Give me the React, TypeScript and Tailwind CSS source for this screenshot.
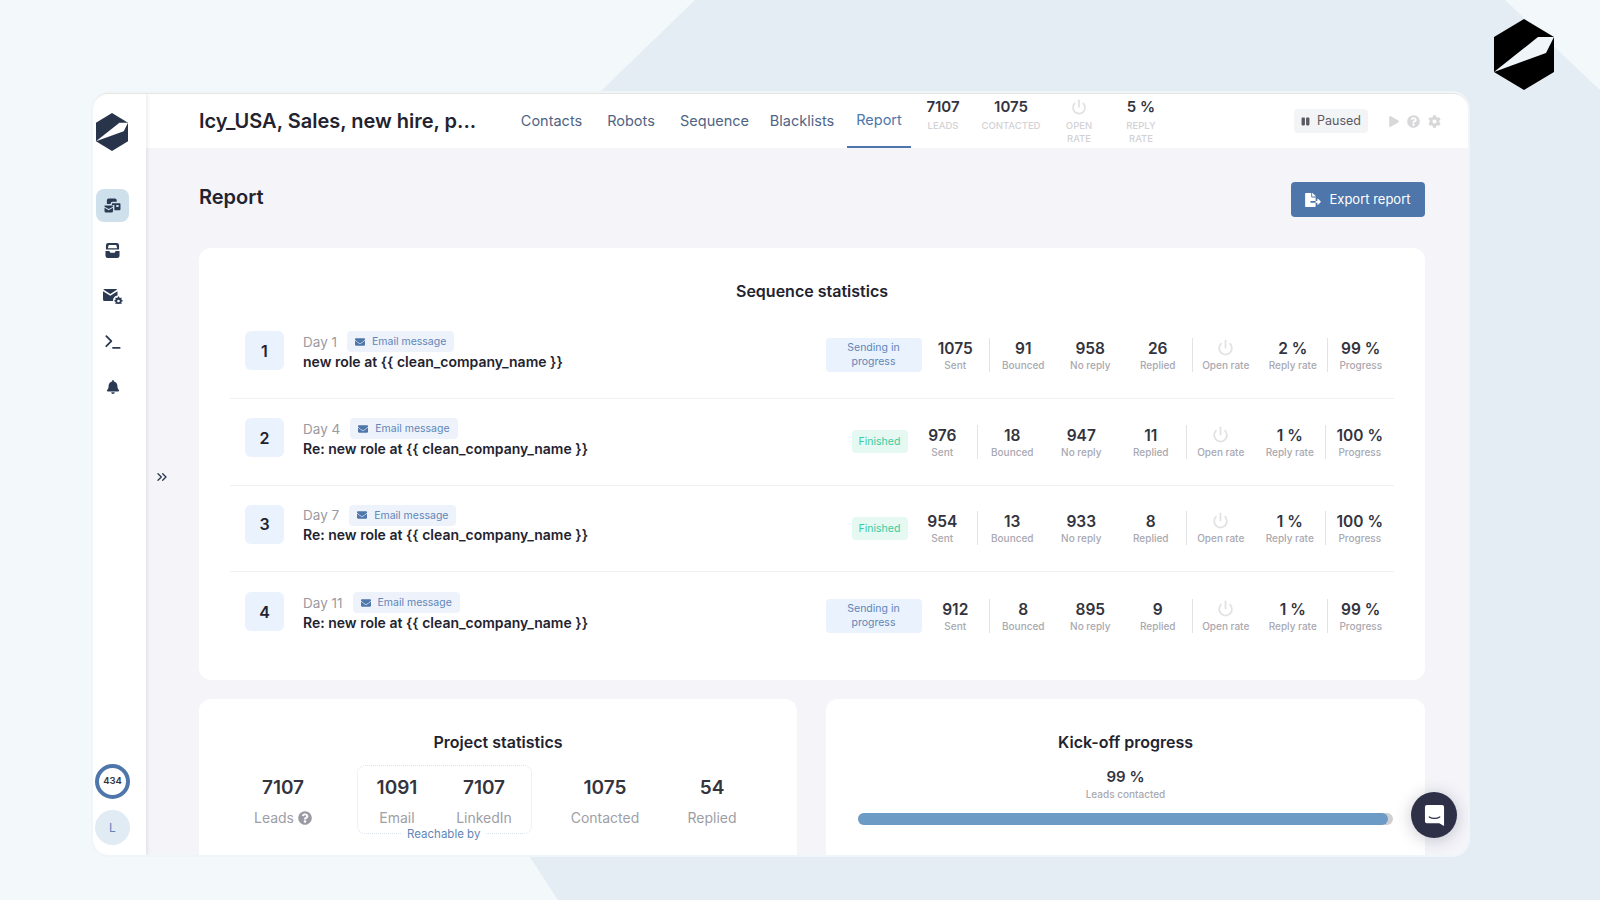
import { ChevronsRight, Power, Terminal } from 'lucide-react'
import { FaBell, FaCog, FaEnvelope, FaFileExport, FaPause, FaPlay, FaQuestionCircle } from 'react-icons/fa'

const font = { fontFamily: 'Inter, "Liberation Sans", sans-serif' }

interface Step {
  n: number
  day: string
  subject: string
  status: 'sending' | 'finished'
  sent: number
  bounced: number
  noReply: number
  replied: number
  replyRate: string
  progress: string
}

const steps: Step[] = [
  { n: 1, day: 'Day 1', subject: 'new role at {{ clean_company_name }}', status: 'sending', sent: 1075, bounced: 91, noReply: 958, replied: 26, replyRate: '2 %', progress: '99 %' },
  { n: 2, day: 'Day 4', subject: 'Re: new role at {{ clean_company_name }}', status: 'finished', sent: 976, bounced: 18, noReply: 947, replied: 11, replyRate: '1 %', progress: '100 %' },
  { n: 3, day: 'Day 7', subject: 'Re: new role at {{ clean_company_name }}', status: 'finished', sent: 954, bounced: 13, noReply: 933, replied: 8, replyRate: '1 %', progress: '100 %' },
  { n: 4, day: 'Day 11', subject: 'Re: new role at {{ clean_company_name }}', status: 'sending', sent: 912, bounced: 8, noReply: 895, replied: 9, replyRate: '1 %', progress: '99 %' }
]

function Logo({ className, fill, cut }: { className: string; fill: string; cut: string }) {
  return (
    <svg viewBox="0 0 60 71" className={className}>
      <polygon points="30,0 60,18 60,53 30,71 0,53 0,18" fill={fill} />
      <polygon points="0,53 44,18 60,18 52,34" fill={cut} />
    </svg>
  )
}

function CampaignIcon() {
  return (
    <svg viewBox="0 0 18 16" className="w-[17px] h-[15px]" fill="#2b3a52">
      <path d="M3 2.5a2 2 0 0 1 2-2h6.5a2 2 0 0 1 2 2V4H9a2 2 0 0 0-2 2v.5H3z" />
      <path d="M0.5 8h9v1.2L5 11.7.5 9.2z" />
      <path d="M.5 10.5 5 13l4.500-2.500V14a1.500 1.500 0 0 1-1.500 1.500H2A1.500 1.500 0 0 1 .5 14z" />
      <path d="M8.500 5.500h8a1 1 0 0 1 1 1V12a1 1 0 0 1-1 1h-5.500V7.500h-2.500zM13 7.500v2h2.500v-2z" />
    </svg>
  )
}

function InboxIcon() {
  return (
    <svg viewBox="0 0 16 16" className="w-[15px] h-[15px]" fill="#2b3a52">
      <path d="M3.500 0h9A2.500 2.500 0 0 1 15 2.500V7H1V2.500A2.500 2.500 0 0 1 3.500 0zM3 5.500h10L12 2.200H4z" fillRule="evenodd" />
      <path d="M0.500 8.500h4.200l1 2h4.600l1-2h4.200v5A2.500 2.500 0 0 1 13 16H3a2.500 2.500 0 0 1-2.500-2.500z" />
    </svg>
  )
}

function MailGearIcon() {
  return (
    <svg viewBox="0 0 20 15" className="w-[20px] h-[15px]" fill="#2b3a52">
      <path d="M1.500 0h11.500a1.500 1.500 0 0 1 1.200.6L7.300 5 .3.600A1.500 1.500 0 0 1 1.500 0z" />
      <path d="M0 2.200l7.300 4.600 7.200-4.600V6.500a5 5 0 0 0-4.500 5.500H1.500A1.500 1.500 0 0 1 0 10.500z" />
      <path d="M15 7.500l1 .1.300 1 .9.400.900-.5.700.7-.5.900.4.900 1 .3v1l-1 .3-.4.900.5.900-.7.700-.9-.5-.9.400-.3 1h-1l-.3-1-.9-.4-.9.500-.7-.7.500-.9-.4-.9-1-.3v-1l1-.3.400-.9-.5-.9.700-.7.900.5.900-.4zM15.500 10.700a1.300 1.300 0 1 0 .01 0z" fillRule="evenodd" />
    </svg>
  )
}

function Stat({ value, label, width, divider }: { value?: string | number; label: string; width: string; divider?: boolean }) {
  return (
    <div className={`${width} h-[34px] pt-[1px] flex flex-col items-center justify-between shrink-0 ${divider ? 'border-l border-[#e3e3e6]' : ''}`}>
      {value === undefined ? (
        <Power className="w-[17px] h-[17px] text-[#e2e2e4]" strokeWidth={2.5} />
      ) : (
        <span className="text-[15.5px] leading-[19px] font-semibold text-[#33343e]">{value}</span>
      )}
      <span className="text-[10px] leading-[13px] font-medium text-[#a9a9b1] whitespace-nowrap">{label}</span>
    </div>
  )
}

function StepRow({ step, last }: { step: Step; last: boolean }) {
  const cell = step.status === 'finished' ? 'w-[69.5px]' : 'w-[67.5px]'
  return (
    <div className={`h-[86.75px] flex items-center ${last ? '' : 'border-b border-[#f0f0f3]'}`}>
      <div className="ml-[15px] mb-[8px] w-[39px] h-[39px] rounded-md bg-[#eaf2fd] flex items-center justify-center text-[16px] font-semibold text-[#23232f]">
        {step.n}
      </div>
      <div className="ml-[19px] mb-[6px]">
        <div className="flex items-center h-[20px]">
          <span className="text-[13.5px] text-[#9a9aa2]">{step.day}</span>
          <span className="ml-[10px] h-[21px] px-2 rounded bg-[#eef3fb] flex items-center gap-[7px] text-[10.5px] text-[#5f86b8]">
            <FaEnvelope className="w-[10px] h-[10px] text-[#4e76aa]" />
            Email message
          </span>
        </div>
        <div className="text-[14px] leading-[20px] font-semibold text-[#23232f]">{step.subject}</div>
      </div>
      <div className="ml-auto flex items-center">
        {step.status === 'sending' ? (
          <div className="w-[96px] h-[34px] rounded bg-[#eaf2fd] flex items-center justify-center text-center text-[10.5px] leading-[13.500px] text-[#5f86b8]">
            Sending in<br />progress
          </div>
        ) : (
          <div className="w-[56px] h-[23px] rounded bg-[#e6f8f2] flex items-center justify-center text-[10.5px] text-[#3bcb9e]">
            Finished
          </div>
        )}
        <Stat value={step.sent} label="Sent" width={cell} />
        <Stat value={step.bounced} label="Bounced" width={cell} divider />
        <Stat value={step.noReply} label="No reply" width={cell} />
        <Stat value={step.replied} label="Replied" width={cell} />
        <Stat label="Open rate" width={cell} divider />
        <Stat value={step.replyRate} label="Reply rate" width={cell} />
        <Stat value={step.progress} label="Progress" width={cell} divider />
      </div>
    </div>
  )
}

function HeaderStat({ value, label, width }: { value?: string; label: string; width: string }) {
  return (
    <div className={`${width} flex flex-col items-center text-center`}>
      {value ? (
        <span className="h-[20px] text-[15px] leading-[20px] font-semibold text-[#33343e]">{value}</span>
      ) : (
        <span className="h-[20px] flex items-center"><Power className="w-[16px] h-[16px] text-[#e0e0e2]" strokeWidth={2.5} /></span>
      )}
      <span className="mt-[2px] max-w-[60px] text-[9.5px] leading-[13px] font-medium text-[#d2d2d6] uppercase">{label}</span>
    </div>
  )
}

function BigStat({ value, label, width, icon }: { value: string; label: string; width: string; icon?: boolean }) {
  return (
    <div className={`${width} flex flex-col items-center shrink-0`}>
      <span className="text-[19px] leading-[26px] font-semibold text-[#33343e]">{value}</span>
      <span className="mt-[6px] flex items-center gap-1 text-[14px] leading-[22px] text-[#9e9ea6]">
        {label}
        {icon && <FaQuestionCircle className="w-[14px] h-[14px] text-[#9a9aa2]" />}
      </span>
    </div>
  )
}

export default function App() {
  return (
    <div className="relative w-[1600px] h-[900px] overflow-hidden bg-[#f3f8fb]" style={font}>
      {/* background shapes */}
      <svg viewBox="0 0 1600 900" className="absolute inset-0 w-full h-full">
        <polygon points="695,0 1505,0 1600,90 1600,900 558,900 250,430" fill="#e5edf4" />
      </svg>
      <Logo className="absolute left-[1494px] top-[19px] w-[60px] h-[71px]" fill="#000000" cut="#f0f5fa" />

      <div className="relative ml-[93px] pt-[93px] w-[1375px]">
        <div className="relative h-[762px] rounded-2xl overflow-hidden flex bg-[#f4f4f9] border-t border-[#e6e6e0] ring-[2px] ring-[#f0f5fa]">
          {/* sidebar */}
          <aside className="w-[53px] shrink-0 pr-[14px] bg-white shadow-[2px_0_3px_rgba(40,40,70,0.08)] z-10 flex flex-col items-center">
            <Logo className="mt-[19px] -ml-[2px] w-[32px] h-[38px]" fill="#27344a" cut="#ffffff" />
            <div className="mt-[38px] w-[33px] h-[33px] rounded-lg bg-[#cfe0ed] flex items-center justify-center">
              <CampaignIcon />
            </div>
            <div className="mt-[21px] h-[15px] flex items-center"><InboxIcon /></div>
            <div className="mt-[31px] h-[15px] flex items-center"><MailGearIcon /></div>
            <div className="mt-[30px] h-[15px] flex items-center">
              <Terminal className="w-[20px] h-[20px] text-[#2b3a52]" strokeWidth={2.2} />
            </div>
            <div className="mt-[30px] h-[15px] flex items-center"><FaBell className="w-[14px] h-[14px] text-[#2b3a52]" /></div>
            <div className="mt-auto w-[35px] h-[35px] rounded-full border-[4px] border-[#4e76aa] flex items-center justify-center text-[9.5px] font-semibold text-[#33343e]">
              434
            </div>
            <div className="mt-[11px] mb-[10px] w-[35px] h-[35px] rounded-full bg-[#e1ebf4] flex items-center justify-center text-[12px] text-[#5f86b8]">
              L
            </div>
          </aside>

          <div className="flex-1 min-w-0 flex flex-col">
            {/* header */}
            <header className="h-[54px] shrink-0 bg-white flex items-center pl-[53px] pr-[27px]">
              <h1 className="w-[321px] shrink-0 text-[20px] font-semibold text-[#23232f] whitespace-nowrap">Icy_USA, Sales, new hire, p...</h1>
              <nav className="flex h-full -ml-[7px] text-[14.5px] text-[#4f6484]">
                <a className="w-[77px] pb-[1px] flex items-center justify-center">Contacts</a>
                <a className="w-[82px] pb-[1px] flex items-center justify-center">Robots</a>
                <a className="w-[85px] pb-[1px] flex items-center justify-center">Sequence</a>
                <a className="w-[90px] pb-[1px] flex items-center justify-center">Blacklists</a>
                <a className="w-[64px] flex items-center justify-center text-[#4e76aa] border-b-2 border-[#4e76aa]">Report</a>
              </nav>
              <div className="flex items-start self-start pt-[3px]">
                <HeaderStat value="7107" label="Leads" width="w-[64px]" />
                <HeaderStat value="1075" label="Contacted" width="w-[72px]" />
                <HeaderStat label="Open rate" width="w-[64px] px-[16px]" />
                <HeaderStat value="5 %" label="Reply rate" width="w-[60px] px-[14px]" />
              </div>
              <div className="ml-auto w-[74px] h-[24px] rounded bg-[#f3f4f6] flex items-center justify-center gap-[7px] text-[12.5px] text-[#5a5a64]">
                <FaPause className="w-[9px] h-[9px] text-[#5a5a64]" />
                Paused
              </div>
              <div className="ml-[21px] flex items-center gap-[8px] text-[#d8d8da]">
                <FaPlay className="w-[10px] h-[11px]" />
                <FaQuestionCircle className="w-[13px] h-[13px]" />
                <FaCog className="w-[13px] h-[13px]" />
              </div>
            </header>

            {/* content */}
            <main className="flex-1 min-h-0 overflow-hidden pl-[53px] pr-[43px] pt-[34px]">
              <div className="flex items-start justify-between h-[35px]">
                <h2 className="-mt-[1px] text-[20px] leading-[32px] font-semibold text-[#23232f]">Report</h2>
                <button className="w-[134px] h-[35px] rounded bg-[#4e76aa] text-white text-[13px] flex items-center justify-center gap-[8px]">
                  <FaFileExport className="w-[16px] h-[14px]" />
                  Export report
                </button>
              </div>

              <section className="mt-[31px] h-[432px] rounded-xl bg-white px-[31px] pt-[32px]">
                <h3 className="text-center text-[16px] leading-[22px] font-semibold text-[#23232f]">Sequence statistics</h3>
                <div className="mt-[10px]">
                  {steps.map((s, i) => (
                    <StepRow key={s.n} step={s} last={i === steps.length - 1} />
                  ))}
                </div>
              </section>

              <div className="mt-[19px] grid grid-cols-[598px_599px] gap-[29px]">
                <section className="h-[200px] rounded-xl bg-white pt-[32px]">
                  <h3 className="text-center text-[16px] leading-[22px] font-semibold text-[#23232f]">Project statistics</h3>
                  <div className="mt-[12px] ml-[26px] flex items-start">
                    <div className="pt-[10px]"><BigStat value="7107" label="Leads" width="w-[116px]" icon /></div>
                    <div className="relative ml-[16px] w-[175px] h-[69px] rounded-lg border border-dotted border-[#d9e3ee] pt-[9px] flex justify-center pr-[8px]">
                      <BigStat value="1091" label="Email" width="w-[87px]" />
                      <BigStat value="7107" label="LinkedIn" width="w-[87px]" />
                      <span className="absolute left-[43px] top-[60px] bg-white px-[6px] text-[11.500px] leading-[16px] text-[#5f86b8] whitespace-nowrap">Reachable by</span>
                    </div>
                    <div className="pt-[10px] flex">
                      <BigStat value="1075" label="Contacted" width="w-[146px]" />
                      <BigStat value="54" label="Replied" width="w-[68px]" />
                    </div>
                  </div>
                </section>

                <section className="h-[200px] rounded-xl bg-white pt-[32px] px-[32px]">
                  <h3 className="text-center text-[16px] leading-[22px] font-semibold text-[#23232f]">Kick-off progress</h3>
                  <div className="mt-[14px] text-center text-[15px] leading-[20px] font-semibold text-[#33343e]">99 %</div>
                  <div className="text-center text-[10px] leading-[14px] font-medium text-[#a9a9b1]">Leads contacted</div>
                  <div className="mt-[12px] h-[12px] rounded-full bg-[#cfcfd2]">
                    <div className="h-full rounded-full bg-[#6c9bc5]" style={{ width: '99%' }} />
                  </div>
                </section>
              </div>
            </main>
          </div>

          {/* collapse toggle */}
          <ChevronsRight className="absolute left-[61px] top-[375px] w-[16px] h-[16px] text-[#2b3a52] z-20" />

          {/* chat launcher */}
          <div className="absolute right-[11px] bottom-[17px] w-[46px] h-[46px] rounded-full bg-[#2d3047] shadow-[0_2px_16px_rgba(40,40,70,0.25)] flex items-center justify-center z-20">
            <svg viewBox="0 0 22 24" className="w-[21px] h-[23px]">
              <path d="M3 1h16a2 2 0 0 1 2 2v20l-5-3H3a2 2 0 0 1-2-2V3a2 2 0 0 1 2-2z" fill="#ffffff" />
              <path d="M5.500 13.500c3 2 8 2 11 0" fill="none" stroke="#2d3047" strokeWidth="1.300" strokeLinecap="round" />
            </svg>
          </div>
        </div>
      </div>
    </div>
  )
}
